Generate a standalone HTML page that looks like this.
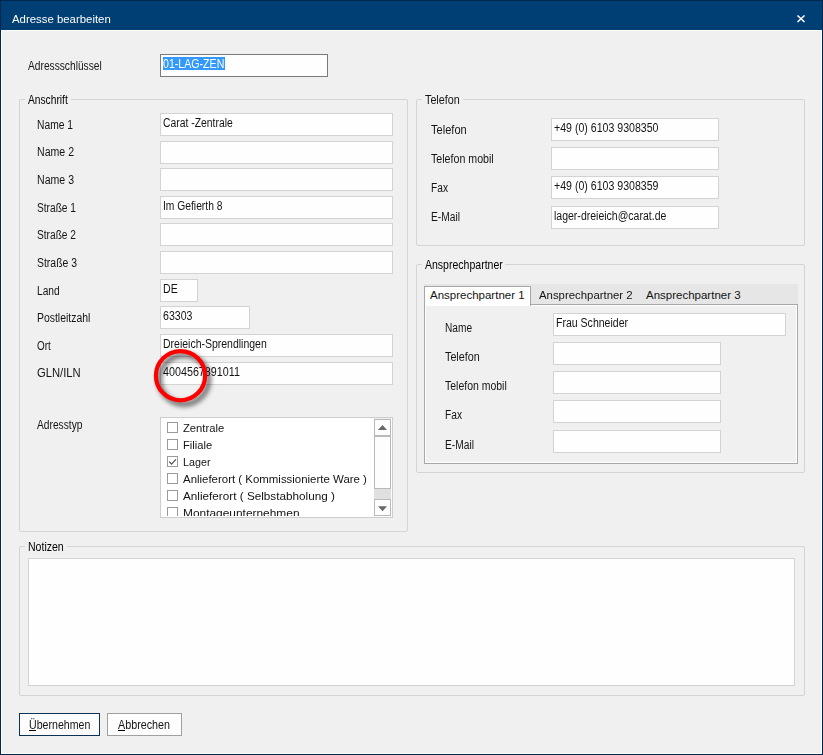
<!DOCTYPE html><html><head><meta charset="utf-8"><style>
html,body{margin:0;padding:0;}
body{width:823px;height:755px;position:relative;overflow:hidden;background:#f0f0f0;font-family:"Liberation Sans",sans-serif;}
.t{position:absolute;font-size:12px;line-height:12px;white-space:nowrap;transform-origin:0 0;}
.b{position:absolute;box-sizing:border-box;border:1px solid #d3d3d3;}
.g{position:absolute;box-sizing:border-box;border:1px solid #d4d4d4;border-radius:2px;}
.gap{position:absolute;background:#f0f0f0;}
</style></head><body>
<div style="position:absolute;left:0;top:0;width:823px;height:755px;background:#002650;"></div>
<div style="position:absolute;left:1px;top:1px;width:821px;height:29px;background:#003f73;"></div>
<div style="position:absolute;left:1px;top:30px;width:821px;height:724px;background:#fdfdfd;"></div>
<div style="position:absolute;left:2px;top:31px;width:819px;height:722px;background:#f0f0f0;"></div>
<div class="t" style="left:12px;top:13px;font-size:11.5px;transform:scaleX(0.9900);color:#ffffff;">Adresse bearbeiten</div>
<svg style="position:absolute;left:0;top:0" width="823" height="40"><path d="M797.5 15.5 L804.5 22 M804.5 15.5 L797.5 22" stroke="#fff" stroke-width="1.6" fill="none"/></svg>
<div class="t" style="left:28px;top:60px;transform:scaleX(0.8506);color:#141414;">Adressschlüssel</div>
<div class="b" style="left:160px;top:54px;width:168px;height:23px;border-color:#7a7a7a;background:#fefefe;"></div>
<div style="position:absolute;left:163px;top:57px;width:62px;height:13px;background:#3399ff;"></div>
<div class="t" style="left:163px;top:58px;transform:scaleX(0.8841);color:#ffffff;">01-LAG-ZEN</div>
<div class="g" style="left:19px;top:99px;width:389px;height:433px;"></div>
<div class="gap" style="left:25px;top:98px;width:46px;height:3px;"></div>
<div class="t" style="left:28px;top:94px;transform:scaleX(0.8511);color:#000000;">Anschrift</div>
<div class="t" style="left:37px;top:119px;transform:scaleX(0.8571);color:#141414;">Name 1</div>
<div class="b" style="left:160px;top:113px;width:233px;height:23px;border-color:#d3d3d3;background:#fefefe;"></div>
<div class="t" style="left:163px;top:117px;transform:scaleX(0.8642);color:#141414;">Carat -Zentrale</div>
<div class="t" style="left:37px;top:146px;transform:scaleX(0.8810);color:#141414;">Name 2</div>
<div class="b" style="left:160px;top:141px;width:233px;height:23px;border-color:#d3d3d3;background:#fefefe;"></div>
<div class="t" style="left:37px;top:174px;transform:scaleX(0.8810);color:#141414;">Name 3</div>
<div class="b" style="left:160px;top:168px;width:233px;height:23px;border-color:#d3d3d3;background:#fefefe;"></div>
<div class="t" style="left:37px;top:202px;transform:scaleX(0.8478);color:#141414;">Straße 1</div>
<div class="b" style="left:160px;top:196px;width:233px;height:23px;border-color:#d3d3d3;background:#fefefe;"></div>
<div class="t" style="left:163px;top:200px;transform:scaleX(0.8571);color:#141414;">Im Gefierth 8</div>
<div class="t" style="left:37px;top:229px;transform:scaleX(0.8478);color:#141414;">Straße 2</div>
<div class="b" style="left:160px;top:223px;width:233px;height:23px;border-color:#d3d3d3;background:#fefefe;"></div>
<div class="t" style="left:37px;top:257px;transform:scaleX(0.8696);color:#141414;">Straße 3</div>
<div class="b" style="left:160px;top:251px;width:233px;height:23px;border-color:#d3d3d3;background:#fefefe;"></div>
<div class="t" style="left:37px;top:285px;transform:scaleX(0.8519);color:#141414;">Land</div>
<div class="b" style="left:160px;top:279px;width:38px;height:23px;border-color:#d3d3d3;background:#fefefe;"></div>
<div class="t" style="left:163px;top:283px;transform:scaleX(0.8824);color:#141414;">DE</div>
<div class="t" style="left:37px;top:312px;transform:scaleX(0.8689);color:#141414;">Postleitzahl</div>
<div class="b" style="left:160px;top:306px;width:90px;height:23px;border-color:#d3d3d3;background:#fefefe;"></div>
<div class="t" style="left:163px;top:310px;transform:scaleX(0.8824);color:#141414;">63303</div>
<div class="t" style="left:37px;top:340px;transform:scaleX(0.8235);color:#141414;">Ort</div>
<div class="b" style="left:160px;top:334px;width:233px;height:23px;border-color:#d3d3d3;background:#fefefe;"></div>
<div class="t" style="left:163px;top:338px;transform:scaleX(0.8739);color:#141414;">Dreieich-Sprendlingen</div>
<div class="t" style="left:37px;top:367px;transform:scaleX(0.9362);color:#141414;">GLN/ILN</div>
<div class="b" style="left:160px;top:362px;width:233px;height:23px;border-color:#d3d3d3;background:#fefefe;"></div>
<div class="t" style="left:163px;top:366px;transform:scaleX(0.8953);color:#141414;">4004567891011</div>
<div class="t" style="left:37px;top:419px;transform:scaleX(0.8519);color:#141414;">Adresstyp</div>
<div class="b" style="left:160px;top:417px;width:233px;height:101px;border-color:#cdcdcd;background:#ffffff;"></div>
<div style="position:absolute;left:161px;top:418px;width:213px;height:98px;overflow:hidden;">
<div style="position:absolute;left:6px;top:4px;width:11px;height:11px;box-sizing:border-box;border:1px solid #9a9a9a;background:#fff;"></div>
<div class="t" style="left:22px;top:4px;font-size:11.5px;transform:scaleX(0.9767);color:#141414;">Zentrale</div>
<div style="position:absolute;left:6px;top:21px;width:11px;height:11px;box-sizing:border-box;border:1px solid #9a9a9a;background:#fff;"></div>
<div class="t" style="left:22px;top:21px;font-size:11.5px;transform:scaleX(0.9677);color:#141414;">Filiale</div>
<div style="position:absolute;left:6px;top:38px;width:11px;height:11px;box-sizing:border-box;border:1px solid #9a9a9a;background:#fff;"></div>
<svg style="position:absolute;left:6px;top:38px" width="11" height="11"><path d="M2.2 5.6 L4.6 8.2 L8.9 3.4" stroke="#4a4a4a" stroke-width="1.15" fill="none"/></svg>
<div class="t" style="left:22px;top:38px;font-size:11.5px;transform:scaleX(0.9333);color:#141414;">Lager</div>
<div style="position:absolute;left:6px;top:55px;width:11px;height:11px;box-sizing:border-box;border:1px solid #9a9a9a;background:#fff;"></div>
<div class="t" style="left:22px;top:55px;font-size:11.5px;transform:scaleX(0.9946);color:#141414;">Anlieferort ( Kommissionierte Ware )</div>
<div style="position:absolute;left:6px;top:72px;width:11px;height:11px;box-sizing:border-box;border:1px solid #9a9a9a;background:#fff;"></div>
<div class="t" style="left:22px;top:72px;font-size:11.5px;transform:scaleX(1.0201);color:#141414;">Anlieferort ( Selbstabholung )</div>
<div style="position:absolute;left:6px;top:89px;width:11px;height:11px;box-sizing:border-box;border:1px solid #9a9a9a;background:#fff;"></div>
<div class="t" style="left:22px;top:89px;font-size:11.5px;transform:scaleX(1.0357);color:#141414;">Montageunternehmen</div>
</div>
<div style="position:absolute;left:374px;top:418px;width:17px;height:98px;background:#f0f0f0;"></div>
<div class="b" style="left:374px;top:419px;width:17px;height:17px;border-color:#b9b9b9;background:#fdfdfd;"></div>
<div class="b" style="left:374px;top:436px;width:17px;height:53px;border-color:#b9b9b9;background:#fdfdfd;"></div>
<div style="position:absolute;left:374px;top:489px;width:17px;height:10px;background:#e0e0e0;"></div>
<div class="b" style="left:374px;top:499px;width:17px;height:17px;border-color:#b9b9b9;background:#fdfdfd;"></div>
<svg style="position:absolute;left:374px;top:419px" width="17" height="97"><path d="M4 11 L8.5 6 L13 11 Z" fill="#686868"/><path d="M4 87.3 L8.5 92.3 L13 87.3 Z" fill="#686868"/></svg>
<div class="g" style="left:416px;top:99px;width:389px;height:147px;"></div>
<div class="gap" style="left:422px;top:98px;width:41px;height:3px;"></div>
<div class="t" style="left:425px;top:94px;transform:scaleX(0.8974);color:#141414;">Telefon</div>
<div class="t" style="left:431px;top:124px;transform:scaleX(0.9231);color:#141414;">Telefon</div>
<div class="b" style="left:551px;top:118px;width:168px;height:23px;border-color:#d3d3d3;background:#fefefe;"></div>
<div class="t" style="left:554px;top:122px;transform:scaleX(0.8824);color:#141414;">+49 (0) 6103 9308350</div>
<div class="t" style="left:431px;top:153px;transform:scaleX(0.8873);color:#141414;">Telefon mobil</div>
<div class="b" style="left:551px;top:147px;width:168px;height:23px;border-color:#d3d3d3;background:#fefefe;"></div>
<div class="t" style="left:431px;top:182px;transform:scaleX(0.8500);color:#141414;">Fax</div>
<div class="b" style="left:551px;top:176px;width:168px;height:23px;border-color:#d3d3d3;background:#fefefe;"></div>
<div class="t" style="left:554px;top:180px;transform:scaleX(0.8824);color:#141414;">+49 (0) 6103 9308359</div>
<div class="t" style="left:431px;top:211px;transform:scaleX(0.8529);color:#141414;">E-Mail</div>
<div class="b" style="left:551px;top:206px;width:168px;height:23px;border-color:#d3d3d3;background:#fefefe;"></div>
<div class="t" style="left:554px;top:210px;transform:scaleX(0.8760);color:#141414;">lager-dreieich@carat.de</div>
<div class="g" style="left:416px;top:264px;width:389px;height:209px;"></div>
<div class="gap" style="left:422px;top:263px;width:83px;height:3px;"></div>
<div class="t" style="left:425px;top:259px;transform:scaleX(0.8764);color:#000000;">Ansprechpartner</div>
<div style="position:absolute;left:424px;top:284px;width:374px;height:21px;background:#e6e6e6;"></div>
<div class="b" style="left:424px;top:304px;width:374px;height:160px;border-color:#a7a7a7;background:#f0f0f0;box-shadow:inset 1px 1px 0 #fff, inset -1px -1px 0 #fff;"></div>
<div style="position:absolute;left:424px;top:286px;width:107px;height:20px;box-sizing:border-box;border:1px solid #a7a7a7;border-bottom:none;background:#fff;"></div>
<div style="position:absolute;left:425px;top:304px;width:105px;height:2px;background:#fff;"></div>
<div class="t" style="left:430px;top:289px;font-size:11.5px;transform:scaleX(1.0000);color:#141414;">Ansprechpartner 1</div>
<div class="t" style="left:539px;top:289px;font-size:11.5px;transform:scaleX(0.9895);color:#141414;">Ansprechpartner 2</div>
<div class="t" style="left:646px;top:289px;font-size:11.5px;transform:scaleX(1.0000);color:#141414;">Ansprechpartner 3</div>
<div class="t" style="left:445px;top:322px;transform:scaleX(0.8438);color:#141414;">Name</div>
<div class="b" style="left:553px;top:313px;width:233px;height:23px;border-color:#d3d3d3;background:#fefefe;"></div>
<div class="t" style="left:556px;top:317px;transform:scaleX(0.8780);color:#141414;">Frau Schneider</div>
<div class="t" style="left:445px;top:351px;transform:scaleX(0.8974);color:#141414;">Telefon</div>
<div class="b" style="left:553px;top:342px;width:168px;height:23px;border-color:#d3d3d3;background:#fefefe;"></div>
<div class="t" style="left:445px;top:380px;transform:scaleX(0.8732);color:#141414;">Telefon mobil</div>
<div class="b" style="left:553px;top:371px;width:168px;height:23px;border-color:#d3d3d3;background:#fefefe;"></div>
<div class="t" style="left:445px;top:409px;transform:scaleX(0.8500);color:#141414;">Fax</div>
<div class="b" style="left:553px;top:400px;width:168px;height:23px;border-color:#d3d3d3;background:#fefefe;"></div>
<div class="t" style="left:445px;top:439px;transform:scaleX(0.8529);color:#141414;">E-Mail</div>
<div class="b" style="left:553px;top:430px;width:168px;height:23px;border-color:#d3d3d3;background:#fefefe;"></div>
<div class="g" style="left:19px;top:546px;width:786px;height:150px;"></div>
<div class="gap" style="left:25px;top:545px;width:42px;height:3px;"></div>
<div class="t" style="left:28px;top:541px;transform:scaleX(0.8780);color:#000000;">Notizen</div>
<div class="b" style="left:28px;top:558px;width:767px;height:128px;border-color:#d3d3d3;background:#fefefe;"></div>
<div class="b" style="left:19px;top:713px;width:81px;height:23px;border-color:#0b3158;background:#fdfdfd;"></div>
<div class="t" style="left:29px;top:719px;transform:scaleX(0.8841);color:#141414;">Übernehmen</div>
<div style="position:absolute;left:29px;top:730px;width:7px;height:1px;background:#000;"></div>
<div class="b" style="left:107px;top:713px;width:75px;height:23px;border-color:#a0a0a0;background:#fdfdfd;"></div>
<div class="t" style="left:118px;top:719px;transform:scaleX(0.8966);color:#141414;">Abbrechen</div>
<div style="position:absolute;left:118px;top:730px;width:7px;height:1px;background:#000;"></div>
<svg style="position:absolute;left:0;top:0" width="823" height="755"><defs><filter id="sh" x="-50%" y="-50%" width="200%" height="200%"><feGaussianBlur stdDeviation="2.4"/></filter></defs><circle cx="184" cy="379.5" r="24.6" stroke="#000" stroke-opacity="0.62" stroke-width="4.6" fill="none" filter="url(#sh)"/><circle cx="180.5" cy="375.7" r="24.6" stroke="#ff0000" stroke-width="4.2" fill="none"/></svg>
</body></html>
